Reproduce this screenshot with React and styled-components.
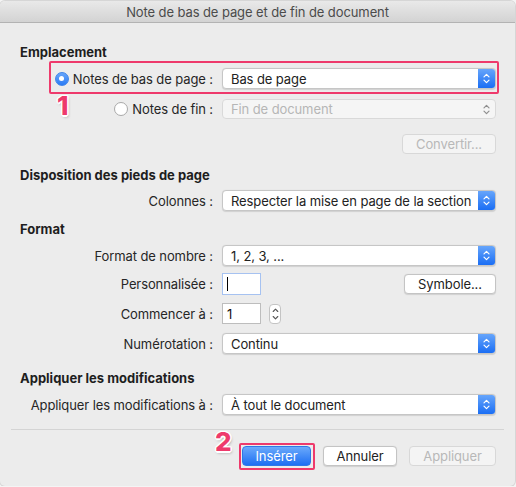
import React from 'react';
import styled, { createGlobalStyle, css } from 'styled-components';

const Global = createGlobalStyle`
  html, body { margin: 0; padding: 0; background: #f4f4f4; }
  body { font-family: Inter, "Liberation Sans", Arial, sans-serif; -webkit-font-smoothing: antialiased; }
`;

const PINK = '#ee3a6c';

const Window = styled.div`
  width: 515px;
  height: 485px;
  margin-top: 1px;
  background: #ececec;
  border-radius: 5px;
  overflow: hidden;
  box-shadow: 0 0 0 1px rgba(0, 0, 0, 0.12);
  display: flex;
  flex-direction: column;
  font-size: 13px;
  letter-spacing: -0.1px;
  color: #262626;
`;

const TitleBar = styled.div`
  flex: none;
  height: 21px;
  display: flex;
  align-items: center;
  justify-content: center;
  background: linear-gradient(#e9e9e9, #d3d3d3);
  border-bottom: 1px solid #b3b3b3;
  color: #4b4b4b;
`;

const Content = styled.div`
  padding: 21px 19px 0 20px;
  display: flex;
  flex-direction: column;
`;

const Heading = styled.div`
  font-weight: 700;
  line-height: 16px;
  color: #1e1e1e;
  letter-spacing: 0;
  margin-top: ${(p) => p.$mt || 0}px;
`;

const Row = styled.div`
  position: relative;
  display: grid;
  grid-template-columns: 193px 1fr;
  column-gap: 9px;
  align-items: center;
  margin-top: ${(p) => p.$mt}px;
  ${(p) =>
    p.$highlight &&
    css`
      &::after {
        content: '';
        position: absolute;
        left: 29px;
        right: -3px;
        top: -7px;
        bottom: -5px;
        border: 2px solid ${PINK};
        border-radius: 2px;
        pointer-events: none;
      }
    `}
`;

const Label = styled.div`
  justify-self: end;
  display: flex;
  align-items: center;
  gap: 4px;
  white-space: nowrap;
`;

const Badge = styled.span`
  position: absolute;
  left: ${(p) => p.$x}px;
  top: ${(p) => p.$y}px;
  font-size: 26px;
  line-height: 26px;
  font-weight: 800;
  color: ${PINK};
  text-shadow: -1.5px 0 #fff, 1.5px 0 #fff, 0 -1.5px #fff, 0 1.5px #fff,
    1px 1px #fff, -1px -1px #fff, 1px -1px #fff, -1px 1px #fff,
    1px 2px 3px rgba(0, 0, 0, 0.35);
  z-index: 2;
  pointer-events: none;
`;

const RadioDot = styled.span`
  width: 14px;
  height: 14px;
  box-sizing: border-box;
  border-radius: 50%;
  display: flex;
  align-items: center;
  justify-content: center;
  ${(p) =>
    p.$checked
      ? css`
          background: linear-gradient(#68a6fa, #2c7cf5);
          border: 1px solid #3f85ea;
          &::after {
            content: '';
            width: 5px;
            height: 5px;
            border-radius: 50%;
            background: #fff;
          }
        `
      : css`
          background: #fff;
          border: 1px solid #a9a9a9;
        `}
`;

const SelectBox = styled.div`
  height: ${(p) => p.$h || 21}px;
  box-sizing: border-box;
  display: flex;
  align-items: center;
  border-radius: 4px;
  overflow: hidden;
  background: ${(p) => (p.$disabled ? '#f5f5f5' : '#fff')};
  border: 1px solid ${(p) => (p.$disabled ? '#d9d9d9' : '#c6c6c6')};
  box-shadow: ${(p) => (p.$disabled ? 'none' : '0 0.5px 1px rgba(0,0,0,0.12)')};
`;

const SelectText = styled.span`
  flex: 1;
  padding-left: 8px;
  color: ${(p) => (p.$disabled ? '#b6b6b6' : '#222')};
  white-space: nowrap;
  overflow: hidden;
`;

const Arrow = styled.span`
  width: 17px;
  align-self: stretch;
  display: flex;
  align-items: center;
  justify-content: center;
  background: ${(p) => (p.$disabled ? 'transparent' : 'linear-gradient(#66a5fb, #1b6ef4)')};
  color: ${(p) => (p.$disabled ? '#8f8f8f' : '#fff')};
`;

const Chevrons = ({ size = 11 }) => (
  <svg width="7" height={size} viewBox="0 0 7 11" fill="none" stroke="currentColor" strokeWidth="1.2" strokeLinecap="round" strokeLinejoin="round">
    <path d="M1 3.8 L3.5 1.3 L6 3.8" />
    <path d="M1 7.2 L3.5 9.7 L6 7.2" />
  </svg>
);

const Select = ({ value, disabled, h }) => (
  <SelectBox $disabled={disabled} $h={h}>
    <SelectText $disabled={disabled}>{value}</SelectText>
    <Arrow $disabled={disabled}>
      <Chevrons />
    </Arrow>
  </SelectBox>
);

const Button = styled.div`
  height: 20px;
  box-sizing: border-box;
  width: ${(p) => p.$w}px;
  display: flex;
  align-items: center;
  justify-content: center;
  border-radius: 4px;
  white-space: nowrap;
  ${(p) =>
    p.$variant === 'primary'
      ? css`
          background: linear-gradient(#6aa9fb, #1e6ff3);
          color: #fff;
          border: 1px solid #2f78e6;
        `
      : p.$variant === 'disabled'
      ? css`
          background: #f4f4f4;
          color: #b8b8b8;
          border: 1px solid #d8d8d8;
        `
      : css`
          background: #fff;
          color: #222;
          border: 1px solid #c4c4c4;
          box-shadow: 0 0.5px 1px rgba(0, 0, 0, 0.12);
        `}
`;

const Right = styled.div`
  display: flex;
  justify-content: flex-end;
  margin-top: ${(p) => p.$mt}px;
`;

const Controls = styled.div`
  display: flex;
  align-items: center;
  justify-content: ${(p) => (p.$spread ? 'space-between' : 'flex-start')};
  gap: 8px;
`;

const TextInput = styled.div`
  width: 39px;
  height: ${(p) => p.$h}px;
  box-sizing: border-box;
  background: #fff;
  border: 1px solid ${(p) => (p.$focus ? '#a6c2f1' : '#bdbdbd')};
  display: flex;
  align-items: center;
  padding-left: 4px;
  color: #111;
`;

const Caret = styled.span`
  width: 1px;
  height: 14px;
  background: #000;
`;

const Stepper = styled.div`
  width: 12px;
  height: 20px;
  box-sizing: border-box;
  border: 1px solid #c4c4c4;
  border-radius: 4px;
  background: #fff;
  display: flex;
  align-items: center;
  justify-content: center;
  color: #555;
`;

const Divider = styled.div`
  height: 1px;
  background: #d4d4d4;
  margin: 14px 11px 0;
`;

const Footer = styled.div`
  position: relative;
  display: flex;
  justify-content: flex-end;
  gap: 12px;
  padding: 16px 19px 0 0;
`;

const Highlighted = styled.div`
  position: relative;
  &::after {
    content: '';
    position: absolute;
    left: -3px;
    right: -4px;
    top: -3px;
    bottom: -4px;
    border: 2px solid ${PINK};
    border-radius: 2px;
    pointer-events: none;
  }
`;

export default function App() {
  return (
    <>
      <Global />
      <Window>
        <TitleBar>Note de bas de page et de fin de document</TitleBar>
        <Content>
          <Heading>Emplacement</Heading>
          <Row $mt={8} $highlight>
            <Label>
              <RadioDot $checked />
              Notes de bas de page :
            </Label>
            <Select value="Bas de page" />
            <Badge $x={37} $y={25}>1</Badge>
          </Row>
          <Row $mt={10}>
            <Label>
              <RadioDot />
              Notes de fin :
            </Label>
            <Select value="Fin de document" disabled h={20} />
          </Row>
          <Right $mt={15}>
            <Button $variant="disabled" $w={94}>Convertir...</Button>
          </Right>

          <Heading $mt={13}>Disposition des pieds de page</Heading>
          <Row $mt={7}>
            <Label>Colonnes :</Label>
            <Select value="Respecter la mise en page de la section" />
          </Row>

          <Heading $mt={10}>Format</Heading>
          <Row $mt={8}>
            <Label>Format de nombre :</Label>
            <Select value="1, 2, 3, ..." />
          </Row>
          <Row $mt={7}>
            <Label>Personnalisée :</Label>
            <Controls $spread>
              <TextInput $focus $h={22}>
                <Caret />
              </TextInput>
              <Button $w={92}>Symbole...</Button>
            </Controls>
          </Row>
          <Row $mt={8}>
            <Label>Commencer à :</Label>
            <Controls>
              <TextInput $h={21}>1</TextInput>
              <Stepper>
                <svg width="7" height="14" viewBox="0 0 7 14" fill="none" stroke="currentColor" strokeWidth="1.1" strokeLinecap="round" strokeLinejoin="round">
                  <path d="M1.2 4.5 L3.5 2.2 L5.8 4.5" />
                  <path d="M1.2 9.5 L3.5 11.8 L5.8 9.5" />
                </svg>
              </Stepper>
            </Controls>
          </Row>
          <Row $mt={9}>
            <Label>Numérotation :</Label>
            <Select value="Continu" />
          </Row>

          <Heading $mt={16}>Appliquer les modifications</Heading>
          <Row $mt={8}>
            <Label>Appliquer les modifications à :</Label>
            <Select value="À tout le document" />
          </Row>
        </Content>
        <Divider />
        <Footer>
          <Badge $x={215} $y={-1}>2</Badge>
          <Highlighted>
            <Button $variant="primary" $w={69}>Insérer</Button>
          </Highlighted>
          <Button $w={74}>Annuler</Button>
          <Button $variant="disabled" $w={87}>Appliquer</Button>
        </Footer>
      </Window>
    </>
  );
}
